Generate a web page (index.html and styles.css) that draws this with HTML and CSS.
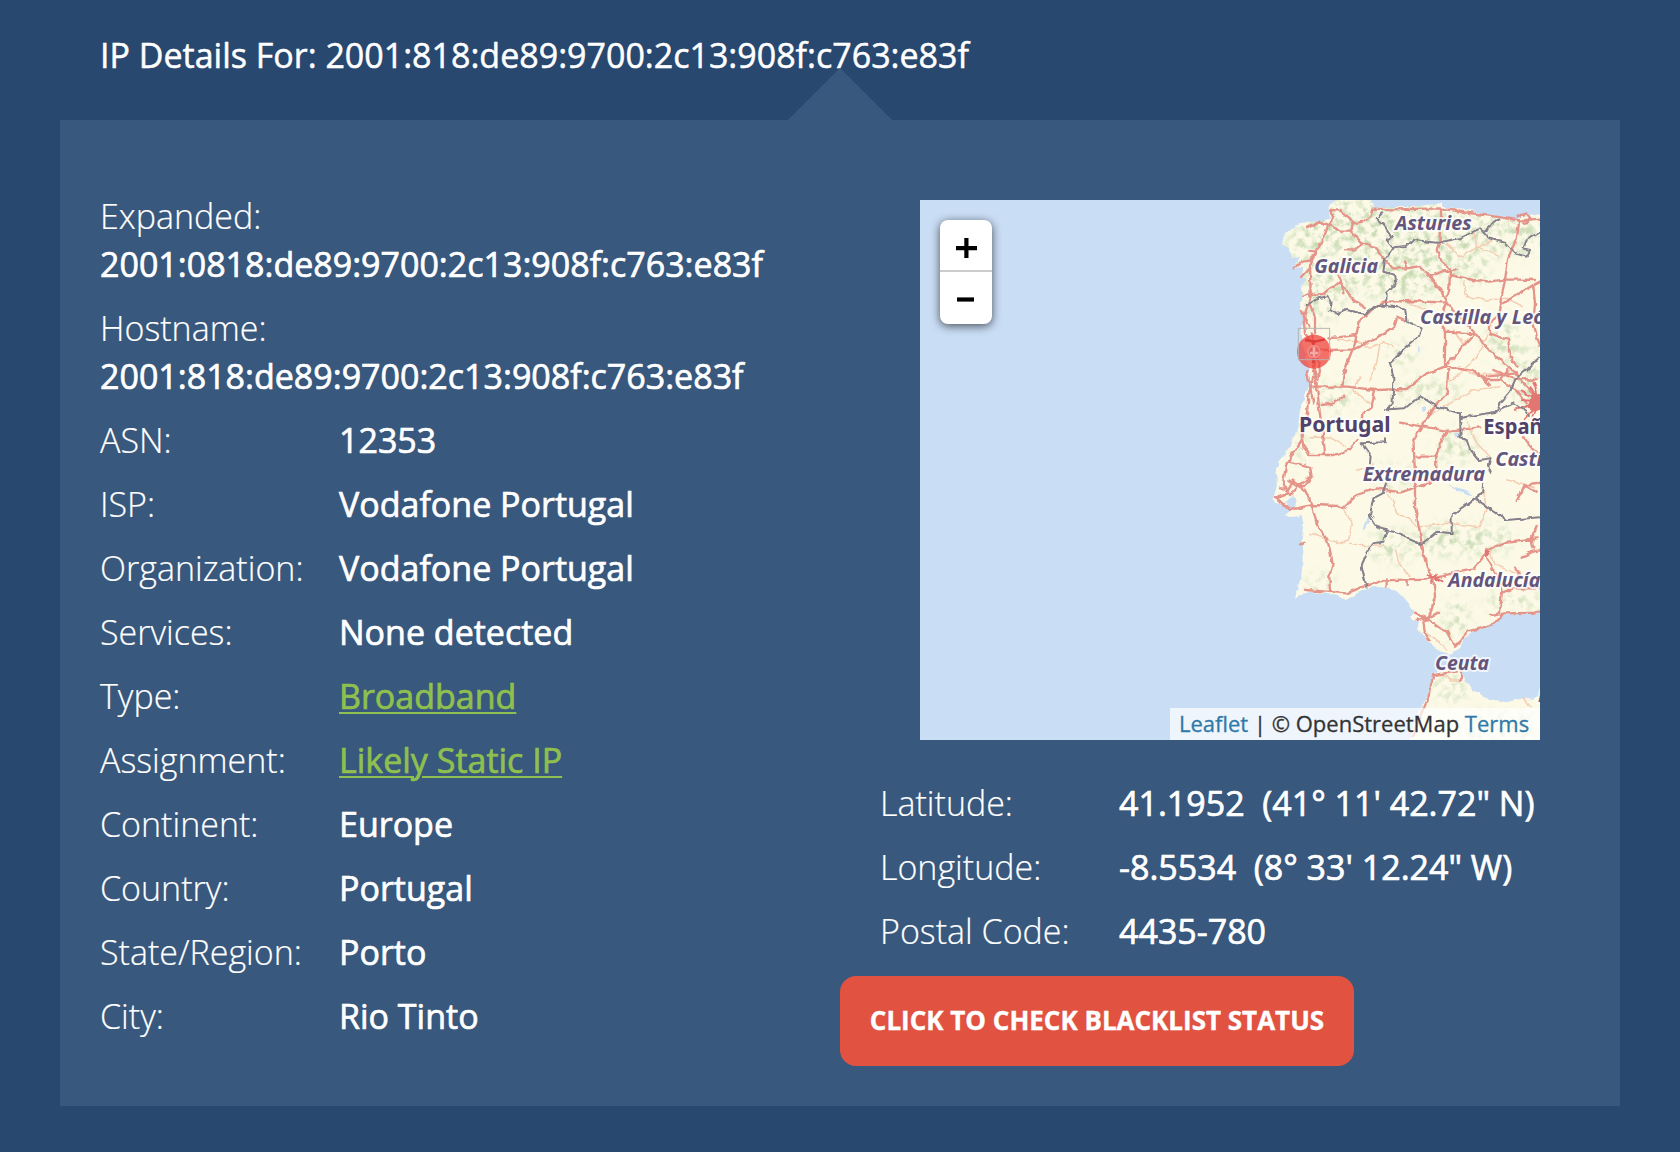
FILE: index.html
```html
<!DOCTYPE html>
<html lang="en">
<head>
<meta charset="utf-8">
<title>IP Details</title>
<link rel="stylesheet" href="styles.css">
</head>
<body>
<h1 class="title">IP Details For: 2001:818:de89:9700:2c13:908f:c763:e83f</h1>
<main class="panel">
  <dl class="details">
    <div class="row stacked"><dt>Expanded:</dt><dd>2001:0818:de89:9700:2c13:908f:c763:e83f</dd></div>
    <div class="row stacked"><dt>Hostname:</dt><dd>2001:818:de89:9700:2c13:908f:c763:e83f</dd></div>
    <div class="row"><dt>ASN:</dt><dd>12353</dd></div>
    <div class="row"><dt>ISP:</dt><dd>Vodafone Portugal</dd></div>
    <div class="row"><dt>Organization:</dt><dd>Vodafone Portugal</dd></div>
    <div class="row"><dt>Services:</dt><dd>None detected</dd></div>
    <div class="row"><dt>Type:</dt><dd><a href="#">Broadband</a></dd></div>
    <div class="row"><dt>Assignment:</dt><dd><a href="#">Likely Static IP</a></dd></div>
    <div class="row"><dt>Continent:</dt><dd>Europe</dd></div>
    <div class="row"><dt>Country:</dt><dd>Portugal</dd></div>
    <div class="row"><dt>State/Region:</dt><dd>Porto</dd></div>
    <div class="row"><dt>City:</dt><dd>Rio Tinto</dd></div>
  </dl>
  <section class="side">
    <div class="map">
      <svg class="tiles" viewBox="-1020 30 1860 1620" aria-label="Map of Portugal">
        <defs>
          <filter id="rough" x="-5%" y="-5%" width="110%" height="110%">
            <feTurbulence type="fractalNoise" baseFrequency="0.045" numOctaves="2" seed="4" result="n"/>
            <feDisplacementMap in="SourceGraphic" in2="n" scale="14" xChannelSelector="R" yChannelSelector="G"/>
            <feGaussianBlur stdDeviation="1.6"/>
          </filter>
          <filter id="forest" x="0" y="0" width="100%" height="100%" color-interpolation-filters="sRGB">
            <feTurbulence type="fractalNoise" baseFrequency="0.045" numOctaves="4" seed="9"/>
            <feColorMatrix values="0 0 0 0 .79  0 0 0 0 .86  0 0 0 0 .71  3.4 0 0 0 -1.5"/>
            <feGaussianBlur stdDeviation="1.5"/>
          </filter>
          <filter id="soft" x="-40%" y="-40%" width="180%" height="180%"><feGaussianBlur stdDeviation="22"/></filter>
          <clipPath id="land">
            <path id="iberia" d="M240 20 205 50 210 85 180 95 125 95 105 110 75 130 65 165 85 175 95 200 120 205 100 235 130 230 125 260 140 265 120 300 130 320 120 345 130 385 125 430 130 470 145 530 150 570 140 600 125 650 118 700 100 745 80 785 55 815 50 840 50 890 38 930 50 940 75 945 90 960 75 980 100 980 125 975 130 1000 125 1060 130 1080 125 1150 115 1190 105 1227 125 1212 150 1205 200 1212 230 1217 258 1230 290 1212 320 1195 350 1190 390 1195 430 1220 450 1245 460 1265 450 1280 475 1300 475 1320 500 1345 520 1370 545 1385 570 1392 600 1375 610 1350 640 1320 680 1310 710 1295 725 1275 780 1268 870 1272V66L800 75 760 90 700 80 620 60 560 55 540 40 500 45 440 52 380 50 340 55 330 20Z"/>
            <path id="africa" d="M520 1450 500 1520 480 1560 460 1610 440 1680H870V1515L835 1520 815 1530 790 1525 740 1537 680 1525 640 1500 615 1470 600 1440 560 1435Z"/>
          </clipPath>
          <mask id="woods">
            <g fill="#fff" filter="url(#soft)">
              <path d="M200 20H340L700 90 840 80V190H690L660 290 540 230 520 340 390 250 250 180 140 230 70 160Z"/>
              <ellipse cx="190" cy="300" rx="60" ry="90"/><ellipse cx="320" cy="240" rx="90" ry="80"/>
              <ellipse cx="450" cy="250" rx="80" ry="90"/><ellipse cx="730" cy="450" rx="45" ry="60"/>
              <ellipse cx="500" cy="600" rx="110" ry="25"/><ellipse cx="590" cy="770" rx="60" ry="45"/>
              <ellipse cx="610" cy="1050" rx="160" ry="45"/><ellipse cx="400" cy="1070" rx="70" ry="45"/>
              <ellipse cx="590" cy="1290" rx="32" ry="70"/><ellipse cx="230" cy="620" rx="45" ry="45"/>
              <ellipse cx="180" cy="1180" rx="45" ry="22"/><ellipse cx="570" cy="1490" rx="50" ry="40"/>
              <ellipse cx="800" cy="560" rx="40" ry="90"/><ellipse cx="720" cy="1610" rx="120" ry="40"/>
              <ellipse cx="110" cy="760" rx="16" ry="80"/><ellipse cx="400" cy="860" rx="60" ry="30"/>
              <ellipse cx="760" cy="1230" rx="90" ry="25"/><ellipse cx="430" cy="490" rx="40" ry="30"/>
            </g>
          </mask>
        </defs>
        <rect class="sea" x="-1020" y="30" width="1860" height="1620"/>
        <g class="ground" filter="url(#rough)"><use href="#iberia"/><use href="#africa"/></g>
        <g clip-path="url(#land)"><g mask="url(#woods)"><rect x="30" y="30" width="810" height="1620" filter="url(#forest)"/></g></g>
        <g class="water" filter="url(#rough)">
          <path d="M78 935 100 915 110 930 105 955 90 960ZM305 1018 325 985 332 965 328 995 312 1020ZM560 885 590 895 620 905 640 920 595 905ZM585 730 600 725 605 740 590 745ZM485 655 497 652 500 662 488 665ZM470 470 480 475 476 487Z"/>
        </g>
        <g class="minor" filter="url(#rough)">
          <path d="M230 450 290 455 330 475 370 455 400 470M360 460 350 520 330 570M610 275 620 320 680 330 740 325 790 350M450 340 520 370 550 390M560 160 600 200 640 180 700 150M580 420 610 460 650 430M690 420 650 500 600 550 560 580M150 740 220 745 260 770M370 895 400 930 410 970 450 990 470 1010M250 960 280 1000 265 1050 240 1060 180 1040 150 1030M270 1060 330 1070 370 1065M670 900 680 960 660 1010 560 1000 480 1010M740 870 820 890M500 680 570 640 640 600 720 590M600 540 650 555 720 550M410 1080 420 1120 450 1160M690 1080 700 1120 740 1140 780 1150M560 1380 520 1340 490 1330M550 1455 570 1470H605M790 1525 810 1550M640 120 650 170 720 200M300 560 280 600 330 640M290 840 340 825M620 690 650 760 690 800"/>
        </g>
        <g class="road" filter="url(#rough)">
          <path d="M210 60 240 62 270 85 278 100 310 95 330 80 338 56 400 58 540 55 600 65 720 82 780 92 840 86"/>
          <path d="M140 115 180 95 205 105 185 160 165 185 150 230 152 320 130 385 135 430 165 470 160 530 168 580"/>
          <path d="M210 60 220 80 205 105 240 122 275 122 278 100M275 122 305 160 350 175 375 210 395 235 440 235 480 228 510 260 540 300 560 330"/>
          <path d="M255 178 285 178 305 163M100 235 125 215 150 212 165 185 145 182M125 262 150 235M150 315 190 312 210 295 245 278 235 255M245 278 250 310M245 278 275 325 315 355"/>
          <path d="M345 350 375 335 450 333 558 338 568 300 570 238 545 215 530 180 538 155 540 110 540 60M510 260 545 245 590 238M570 255 640 270 690 275 735 268 825 270M840 275 820 285 720 345 735 268 745 205 770 150 778 90M820 285 825 340 820 400 840 470"/>
          <path d="M558 338 600 380 645 430 675 465 720 510 770 550M720 345 715 375 690 400 690 430 745 450 750 500 770 530M558 338 545 375 555 430 555 530 620 540 650 545M555 425 645 430 600 480 555 530 500 550 440 597 345 600 260 590 150 590"/>
          <path d="M345 350 320 375 295 400 285 460 265 510 250 560 248 585M170 480 210 480 280 478 340 450 400 410 410 380 435 390M205 445 290 435M130 320 155 310M150 345 165 380 165 430M125 360 145 410"/>
          <path d="M165 540 172 600 178 660 190 740 195 790M160 560 145 620 140 680 125 750 80 820 70 870 85 910 60 920 45 925M120 700 130 770 150 795M85 815 150 830 155 860 130 890 100 870 85 900M155 860 115 885 90 915M150 795 220 795 265 780 290 750M345 600 335 650 310 670 308 700M185 645 220 640 250 620"/>
          <path d="M60 895H75M45 925 75 945 90 960 155 945 235 948 250 955 290 915 350 895 420 908 480 888 510 880M85 870 135 900 155 945 170 1000 200 1045 210 1085 218 1120 208 1160 210 1205M120 1063 135 1058"/>
          <path d="M565 540 560 610 520 655 490 700 460 750 465 850 465 950 480 1030 490 1090 500 1130 520 1165M420 698 490 710 560 722 610 718 660 712M560 725 540 760 528 800 530 860 490 890M470 800H530"/>
          <path d="M135 1200 200 1205 260 1210 310 1190 370 1172 440 1168 520 1165 600 1145 640 1138 675 1095 680 1080 740 1055 830 1045M675 1095 700 1140 720 1170 725 1210 720 1270 690 1275M520 1165 525 1220 505 1290 490 1295 495 1330 510 1350M465 1268 500 1285 535 1268M470 1290 500 1285 540 1315 560 1325 585 1370 605 1350 620 1325 680 1310 715 1290 730 1270 840 1268M720 1210 760 1195 840 1195M785 1100 820 1085 840 1080M830 1010 815 1045 820 1075M770 930 790 890 840 875M790 885 830 905M380 1165V1190M440 1168V1185"/>
          <path d="M640 540 680 570 720 570 745 540M720 570 770 600 800 640M650 545 690 585M770 550 790 580 820 610M765 1130 780 1160 820 1190M680 560 770 550M700 540 760 565 830 570M790 740 820 780 840 790M520 1455 590 1445M603 1440V1470M520 1455 505 1520 480 1580 460 1640"/>
          <path d="M432 215 438 230M770 80 800 70 815 90 790 100M155 430 180 540 175 570M140 540 160 640"/>
        </g>
        <g class="hub" filter="url(#rough)"><path d="M845 612 815 615 812 635 805 650 820 662 845 655Z"/><path d="m840 635-60-35m60 35-75 25m75-25-50 55m50-55-20-60m20 60-55-5m55 5-30-45m30 45-20 45M498 1152 525 1165 550 1178M512 1178 520 1165 532 1150M505 1165H545M675 1080 685 1090 675 1105"/></g>
        <g class="border" filter="url(#rough)">
          <path d="M368 68 350 85 375 110 395 140 380 150 400 175 375 210 370 245 405 255 410 280 380 310 378 350M400 172 440 168 460 150 530 158 600 145 660 115 685 145 735 158 765 190 800 200 810 180 790 175 800 150 840 125M670 125 700 100 715 88"/>
          <path d="M140 345 175 325 205 318 215 340 210 360 230 372 260 360 315 372 350 345 435 355 440 395 485 415 475 440 430 480 390 520 400 560 398 640 375 660M385 658 435 655 480 618 530 650 600 670 602 745 620 750 630 780 655 810 692 805 685 830 692 848M600 685 650 675 710 665 720 640 750 605 765 570 800 540 840 500M720 660 760 640 810 675M375 745 375 757 305 760 332 800 330 820M378 880 368 910 340 925 330 975 355 1015 400 1025 485 1062 530 1025 575 1030 575 975 645 925 740 990 840 982M670 880 665 910 645 925M380 1020 370 1055 340 1060 315 1100 305 1130 315 1170 318 1190"/>
        </g>
        <g class="labels">
          <text x="405" y="121" textLength="230" lengthAdjust="spacingAndGlyphs">Asturies</text>
          <text x="163" y="249" textLength="191" lengthAdjust="spacingAndGlyphs">Galicia</text>
          <text x="480" y="402" textLength="411" lengthAdjust="spacingAndGlyphs">Castilla y León</text>
          <text class="country" x="117" y="185" dy="540" textLength="275" lengthAdjust="spacingAndGlyphs">Portugal</text>
          <text class="country" x="670" y="731" textLength="214" lengthAdjust="spacingAndGlyphs">España</text>
          <text x="308" y="873" textLength="367" lengthAdjust="spacingAndGlyphs">Extremadura</text>
          <text x="706" y="829" textLength="212" lengthAdjust="spacingAndGlyphs">Castilla</text>
          <text x="565" y="1191" textLength="276" lengthAdjust="spacingAndGlyphs">Andalucía</text>
          <text x="525" y="1439" textLength="162" lengthAdjust="spacingAndGlyphs">Ceuta</text>
          <text x="834" y="1535">M</text>
        </g>
        <circle class="pin" cx="162" cy="485" r="51"/>
        <path class="pin-road" d="M135 450 165 455 195 448M160 450V520"/>
        <circle class="pin-core" cx="162" cy="485" r="18"/>
        <path class="pin-cross" d="M162 470V500M150 489H175"/>
        <rect class="pin-frame" x="115" y="415" width="94" height="94"/>
      </svg>
      <div class="zoom">
        <button aria-label="Zoom in"><svg viewBox="0 0 52 50"><path d="M16 28.2H37M26.4 18V38"/></svg></button>
        <button aria-label="Zoom out"><svg viewBox="0 0 52 52"><path d="M17 27.5H34"/></svg></button>
      </div>
      <div class="credit"><a href="#">Leaflet</a> | © OpenStreetMap <a href="#">Terms</a></div>
    </div>
    <dl class="coords">
      <div class="row"><dt>Latitude:</dt><dd>41.1952&nbsp; (41° 11' 42.72" N)</dd></div>
      <div class="row"><dt>Longitude:</dt><dd>-8.5534&nbsp; (8° 33' 12.24" W)</dd></div>
      <div class="row"><dt>Postal Code:</dt><dd>4435-780</dd></div>
    </dl>
    <button class="check">CLICK TO CHECK BLACKLIST STATUS</button>
  </section>
</main>
</body>
</html>
```
FILE: styles.css
```css
* { box-sizing: border-box; }
body {
  margin: 0;
  height: 1152px;
  overflow: hidden;
  background: #28486f;
  color: #fff;
  font: 400 34px/48px "Open Sans", sans-serif;
}
.title {
  margin: 0;
  padding: 31px 100px 41px;
  height: 120px;
  font-size: 34px;
  font-weight: 400;
  line-height: 48px;
  white-space: nowrap;
  -webkit-text-stroke: .5px currentColor;
}
.panel {
  position: relative;
  display: grid;
  grid-template-columns: 740px 1fr;
  margin: 0 60px;
  height: 986px;
  padding: 72px 40px 0;
  background: #38587d;
}
.panel::before {
  content: "";
  position: absolute;
  left: 728px;
  top: -52px;
  border: 52px solid transparent;
  border-top: 0;
  border-bottom-color: #38587d;
}
dl { margin: 0; }
.details, .coords { display: flex; flex-direction: column; gap: 16px; }
.row { display: grid; grid-template-columns: 239px 1fr; white-space: nowrap; }
.row.stacked { grid-template-columns: 1fr; }
dt { font-weight: 300; -webkit-text-stroke: .2px currentColor; }
dd { margin: 0; font-weight: 400; -webkit-text-stroke: .7px currentColor; }
dd a { color: #8fc04f; text-decoration-thickness: 2px; text-underline-offset: 3px; }
.side { padding-top: 8px; }
.map {
  position: relative;
  width: 620px;
  height: 540px;
  margin-left: 80px;
  overflow: hidden;
}
.tiles { display: block; width: 100%; height: 100%; }
.sea { fill: #c9ddf5; }
.ground { fill: #fcfae7; }
.water { fill: #c9ddf5; }
.road, .minor, .border { fill: none; stroke-linejoin: round; stroke-linecap: round; }
.road { stroke: #e5948a; stroke-width: 7; }
.minor { stroke: #f5cdb2; stroke-width: 4.5; }
.border { stroke: #85808c; stroke-width: 6; }
.hub { fill: #e27672; stroke: #e27672; stroke-width: 6; }
.labels {
  font: italic 700 60px "Noto Sans", sans-serif;
  fill: #63557c;
  stroke: rgba(255, 255, 255, .75);
  stroke-width: 12;
  stroke-linejoin: round;
  paint-order: stroke;
}
.labels .country { font-style: normal; fill: #51426a; font-size: 65px; }
.pin { fill: #f03c35; fill-opacity: .72; }
.pin-road { fill: none; stroke: #dc3d3b; stroke-width: 7; }
.pin-core { fill: #e8615f; stroke: #f08b88; stroke-width: 5; }
.pin-cross { fill: none; stroke: #f6aaa6; stroke-width: 8; }
.pin-frame { fill: none; stroke: #b8b4b2; stroke-width: 3; }
.zoom {
  position: absolute;
  left: 20px;
  top: 20px;
  width: 52px;
  height: 104px;
  border-radius: 8px;
  background: #fff;
  box-shadow: 0 2px 10px rgba(0, 0, 0, .65);
}
.zoom button { display: block; width: 52px; height: 52px; padding: 0; border: 0; background: none; }
.zoom button:first-child { border-bottom: 2px solid #ccc; }
.zoom svg { display: block; width: 100%; height: 100%; fill: none; stroke: #000; stroke-width: 4.2; stroke-linecap: butt; }
.credit {
  position: absolute;
  right: 0;
  bottom: 0;
  width: 370px;
  height: 32px;
  padding-left: 9px;
  background: rgba(255, 255, 255, .7);
  color: #333;
  font-size: 22px;
  line-height: 30px;
  white-space: nowrap;
  -webkit-text-stroke: .3px currentColor;
}
.credit a { color: #2f79a8; text-decoration: none; }
.coords { padding: 39px 0 0 40px; }
.check {
  display: block;
  width: 514px;
  height: 90px;
  margin-top: 21px;
  padding: 0 0 2px;
  border: 0;
  border-radius: 16px;
  background: #e15241;
  color: #fff;
  font: 700 26px/88px "Open Sans", sans-serif;
  -webkit-text-stroke: .4px currentColor;
}
```
